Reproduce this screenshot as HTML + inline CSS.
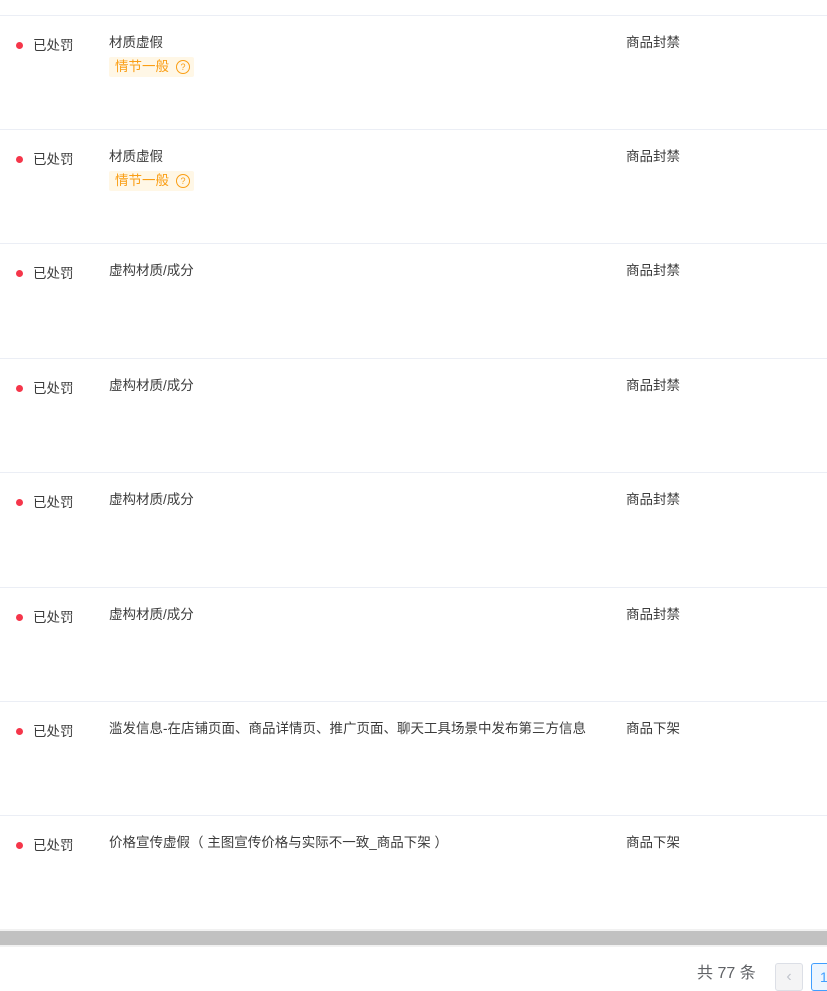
<!DOCTYPE html>
<html><head><meta charset="utf-8"><style>
body{margin:0;width:827px;height:990px;background:#fff;position:relative;overflow:hidden;font-family:"Liberation Sans","Noto Sans CJK SC",sans-serif;font-size:13.5px;color:#3c3c3c}
.line{position:absolute;left:0;width:827px;height:1px;background:#ebeef5}
.t{position:absolute;white-space:nowrap;line-height:20px}
.dot{position:absolute;left:16px;width:7px;height:7px;border-radius:50%;background:#f5364a}
.tag{position:absolute;left:109px;height:20px;width:85px;background:#fff7e6;border-radius:2px;color:#fa9e14;line-height:20px;font-size:13.5px}
.tag span{position:absolute;left:6px}
.q{position:absolute;left:67px;top:3px;width:12px;height:12px;border:1px solid #fa9e14;border-radius:50%;font-size:9px;line-height:12px;text-align:center}
</style></head><body>
<div class="line" style="top:15px"></div>
<div class="line" style="top:129px"></div>
<div class="line" style="top:243px"></div>
<div class="line" style="top:358px"></div>
<div class="line" style="top:472px"></div>
<div class="line" style="top:587px"></div>
<div class="line" style="top:701px"></div>
<div class="line" style="top:815px"></div>

<div class="dot" style="top:42px"></div><div class="t" style="left:33px;top:36px">已处罚</div>
<div class="t" style="left:109px;top:33px">材质虚假</div>
<div class="tag" style="top:57px"><span>情节一般</span><div class="q">?</div></div>
<div class="t" style="left:626px;top:33px">商品封禁</div>

<div class="dot" style="top:156px"></div><div class="t" style="left:33px;top:150px">已处罚</div>
<div class="t" style="left:109px;top:147px">材质虚假</div>
<div class="tag" style="top:171px"><span>情节一般</span><div class="q">?</div></div>
<div class="t" style="left:626px;top:147px">商品封禁</div>

<div class="dot" style="top:270px"></div><div class="t" style="left:33px;top:264px">已处罚</div>
<div class="t" style="left:109px;top:261px">虚构材质/成分</div>
<div class="t" style="left:626px;top:261px">商品封禁</div>

<div class="dot" style="top:385px"></div><div class="t" style="left:33px;top:379px">已处罚</div>
<div class="t" style="left:109px;top:376px">虚构材质/成分</div>
<div class="t" style="left:626px;top:376px">商品封禁</div>

<div class="dot" style="top:499px"></div><div class="t" style="left:33px;top:493px">已处罚</div>
<div class="t" style="left:109px;top:490px">虚构材质/成分</div>
<div class="t" style="left:626px;top:490px">商品封禁</div>

<div class="dot" style="top:614px"></div><div class="t" style="left:33px;top:608px">已处罚</div>
<div class="t" style="left:109px;top:605px">虚构材质/成分</div>
<div class="t" style="left:626px;top:605px">商品封禁</div>

<div class="dot" style="top:728px"></div><div class="t" style="left:33px;top:722px">已处罚</div>
<div class="t" style="left:109px;top:719px">滥发信息-在店铺页面、商品详情页、推广页面、聊天工具场景中发布第三方信息</div>
<div class="t" style="left:626px;top:719px">商品下架</div>

<div class="dot" style="top:842px"></div><div class="t" style="left:33px;top:836px">已处罚</div>
<div class="t" style="left:109px;top:833px">价格宣传虚假（ 主图宣传价格与实际不一致_商品下架 ）</div>
<div class="t" style="left:626px;top:833px">商品下架</div>

<div style="position:absolute;left:0;top:929px;width:827px;height:18px;background:#f1f1f1"></div>
<div style="position:absolute;left:0;top:931px;width:827px;height:14px;background:#c1c1c1"></div>

<div class="t" style="left:697px;top:964px;font-size:16px;color:#606266">共 77 条</div>
<div style="position:absolute;left:775px;top:963px;width:26px;height:26px;border:1px solid #dcdfe6;border-radius:3px;background:#f4f4f5;color:#c0c4cc;text-align:center;line-height:26px;font-size:16px">‹</div>
<div style="position:absolute;left:811px;top:963px;width:26px;height:26px;border:1px solid #409eff;border-radius:3px;background:#ecf5ff;color:#409eff;line-height:26px;text-indent:8px;font-size:14px">1</div>
</body></html>
